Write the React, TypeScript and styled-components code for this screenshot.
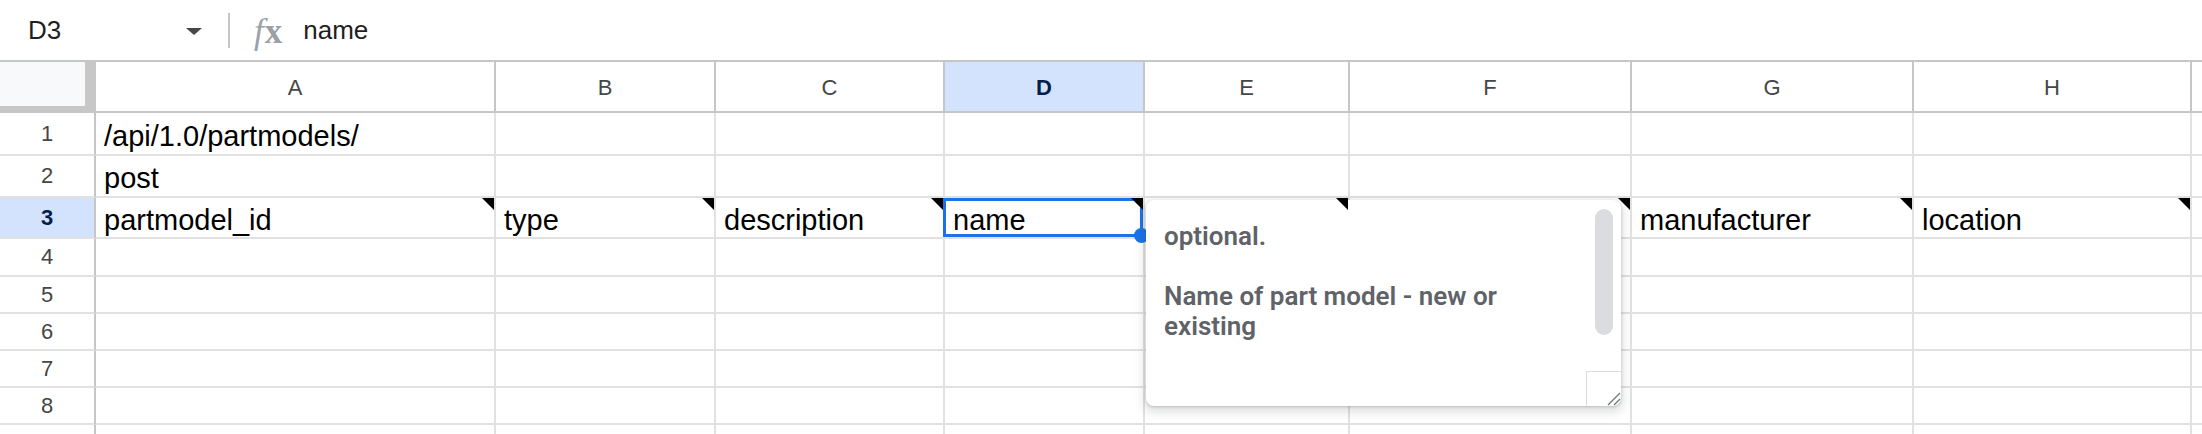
import React from "react";
import styled, { createGlobalStyle } from "styled-components";

type Column = { letter: string; width: number };
type Row = { height: number; cells: string[]; notes?: boolean };

const columns: Column[] = [
  { letter: "A", width: 400 },
  { letter: "B", width: 220 },
  { letter: "C", width: 229 },
  { letter: "D", width: 200 },
  { letter: "E", width: 205 },
  { letter: "F", width: 282 },
  { letter: "G", width: 282 },
  { letter: "H", width: 278 },
];

const rows: Row[] = [
  { height: 43, cells: ["/api/1.0/partmodels/"] },
  { height: 42, cells: ["post"] },
  {
    height: 41,
    notes: true,
    cells: ["partmodel_id", "type", "description", "name", "", "", "manufacturer", "location"],
  },
  { height: 38, cells: [] },
  { height: 37, cells: [] },
  { height: 37, cells: [] },
  { height: 37, cells: [] },
  { height: 37, cells: [] },
  { height: 37, cells: [] },
];

const SELECTED_COL = 3;
const SELECTED_ROW = 2;

const GlobalStyle = createGlobalStyle`
  html, body {
    margin: 0;
    padding: 0;
    background: #fff;
  }
  body {
    font-family: "Liberation Sans", Arial, sans-serif;
    overflow: hidden;
  }
`;

const Page = styled.div`
  width: 2202px;
  height: 434px;
  overflow: hidden;
  display: flex;
  flex-direction: column;
  background: #fff;
`;

const FormulaBar = styled.div`
  height: 60px;
  flex: none;
  display: flex;
  align-items: center;
  border-bottom: 2px solid #c4c7c5;
`;

const NameBox = styled.div`
  width: 215px;
  box-sizing: border-box;
  padding: 0 13px 0 28px;
  display: flex;
  align-items: center;
  justify-content: space-between;
  font-size: 26px;
  color: #1f1f1f;
`;

const DropArrow = styled.span`
  width: 0;
  height: 0;
  border-left: 8px solid transparent;
  border-right: 8px solid transparent;
  border-top: 7px solid #444746;
  margin-top: 2px;
`;

const Divider = styled.div`
  width: 2px;
  height: 35px;
  margin-left: 13px;
  background: #c4c7c5;
`;

const FxIcon = styled.span`
  margin-left: 24px;
  font-family: "Liberation Serif", "DejaVu Serif", serif;
  font-size: 35px;
  color: #9aa0a6;
  line-height: 1;
  white-space: nowrap;
  margin-top: 2px;
`;

const FxF = styled.span`
  font-style: italic;
  margin-right: 1px;
`;

const FxX = styled.span`
  font-weight: 700;
`;

const FormulaText = styled.span`
  margin-left: 21px;
  font-size: 26px;
  color: #1f1f1f;
`;

const Grid = styled.div<{ $cols: string; $rows: string }>`
  display: grid;
  grid-template-columns: ${(p) => p.$cols};
  grid-template-rows: ${(p) => p.$rows};
`;

const Corner = styled.div`
  box-sizing: border-box;
  background: #f8f9fa;
  border-right: 11px solid #c7c7c7;
  border-bottom: 7px solid #c7c7c7;
`;

const ColHeader = styled.div<{ $selected?: boolean }>`
  box-sizing: border-box;
  display: flex;
  align-items: center;
  justify-content: center;
  border-right: 2px solid #c4c7c5;
  border-bottom: 2px solid #c4c7c5;
  background: ${(p) => (p.$selected ? "#d3e3fd" : "#fff")};
  color: ${(p) => (p.$selected ? "#041e49" : "#444746")};
  font-weight: ${(p) => (p.$selected ? 700 : 400)};
  font-size: 22px;
  line-height: 1;
  padding-top: 2px;
`;

const RowHeader = styled.div<{ $selected?: boolean }>`
  box-sizing: border-box;
  display: flex;
  align-items: center;
  justify-content: center;
  border-right: 2px solid #c4c7c5;
  border-bottom: 2px solid #e1e1e1;
  background: ${(p) => (p.$selected ? "#d3e3fd" : "#fff")};
  color: ${(p) => (p.$selected ? "#041e49" : "#444746")};
  font-weight: ${(p) => (p.$selected ? 700 : 400)};
  font-size: 22px;
  line-height: 1;
`;

const Cell = styled.div`
  position: relative;
  box-sizing: border-box;
  display: flex;
  align-items: center;
  padding: 5px 8px 0;
  border-right: 2px solid #e1e1e1;
  border-bottom: 2px solid #e1e1e1;
  font-size: 29px;
  line-height: 1;
  color: #000;
  white-space: nowrap;
`;

const NoteMark = styled.span`
  position: absolute;
  top: 0;
  right: 0;
  width: 0;
  height: 0;
  border-top: 12px solid #000;
  border-left: 12px solid transparent;
  z-index: 12;
`;

const SelectionFrame = styled.div`
  position: absolute;
  top: 0;
  left: -2px;
  right: 0;
  bottom: 0;
  border: 3px solid #1a73e8;
  pointer-events: none;
`;

const FillHandle = styled.span`
  position: absolute;
  right: -9px;
  bottom: -9px;
  width: 15px;
  height: 15px;
  border-radius: 50%;
  background: #1a73e8;
  z-index: 2;
`;

const NotePopup = styled.div`
  position: absolute;
  top: 2px;
  left: 1px;
  width: 475px;
  height: 206px;
  box-sizing: border-box;
  padding: 21px 58px 0 18px;
  background: #fff;
  border-radius: 8px;
  box-shadow: 0 1px 3px rgba(60, 64, 67, 0.25), 0 4px 10px 3px rgba(60, 64, 67, 0.14);
  z-index: 10;
  font-family: Roboto, "Noto Sans", sans-serif;
  font-weight: 600;
  font-size: 26px;
  line-height: 30px;
  color: #5f6368;
  white-space: pre-wrap;
`;

const ScrollThumb = styled.div`
  position: absolute;
  top: 9px;
  right: 8px;
  width: 18px;
  height: 126px;
  border-radius: 9px;
  background: #dadce0;
`;

const ResizeGrip = styled.div`
  position: absolute;
  right: 0;
  bottom: 0;
  width: 35px;
  height: 35px;
  box-sizing: border-box;
  border-left: 1px solid #dadce0;
  border-top: 1px solid #dadce0;
  border-bottom-right-radius: 8px;
  display: flex;
  align-items: flex-end;
  justify-content: flex-end;
`;

const GripLines = () => (
  <svg width="18" height="18" viewBox="0 0 18 18">
    <path d="M17 5 L5 17 M17 11 L11 17" stroke="#70757a" strokeWidth="1.3" fill="none" />
  </svg>
);

const App: React.FC = () => {
  const colTemplate = ["96px", ...columns.map((c) => `${c.width}px`), "1fr"].join(" ");
  const rowTemplate = ["51px", ...rows.map((r) => `${r.height}px`)].join(" ");

  return (
    <>
      <GlobalStyle />
      <Page>
        <FormulaBar>
          <NameBox>
            <span>D3</span>
            <DropArrow />
          </NameBox>
          <Divider />
          <FxIcon>
            <FxF>f</FxF>
            <FxX>x</FxX>
          </FxIcon>
          <FormulaText>name</FormulaText>
        </FormulaBar>
        <Grid $cols={colTemplate} $rows={rowTemplate}>
          <Corner />
          {columns.map((c, i) => (
            <ColHeader key={c.letter} $selected={i === SELECTED_COL}>
              {c.letter}
            </ColHeader>
          ))}
          <ColHeader />
          {rows.map((row, r) => (
            <React.Fragment key={r}>
              <RowHeader $selected={r === SELECTED_ROW}>{r + 1}</RowHeader>
              {columns.map((c, i) => {
                const selected = r === SELECTED_ROW && i === SELECTED_COL;
                const popupHere = r === SELECTED_ROW && i === SELECTED_COL + 1;
                return (
                  <Cell key={c.letter}>
                    {row.cells[i] ?? ""}
                    {row.notes && <NoteMark />}
                    {selected && (
                      <SelectionFrame>
                        <FillHandle />
                      </SelectionFrame>
                    )}
                    {popupHere && (
                      <NotePopup>
                        {"optional.\n\nName of part model - new or existing"}
                        <ScrollThumb />
                        <ResizeGrip>
                          <GripLines />
                        </ResizeGrip>
                      </NotePopup>
                    )}
                  </Cell>
                );
              })}
              <Cell />
            </React.Fragment>
          ))}
        </Grid>
      </Page>
    </>
  );
};

export default App;
